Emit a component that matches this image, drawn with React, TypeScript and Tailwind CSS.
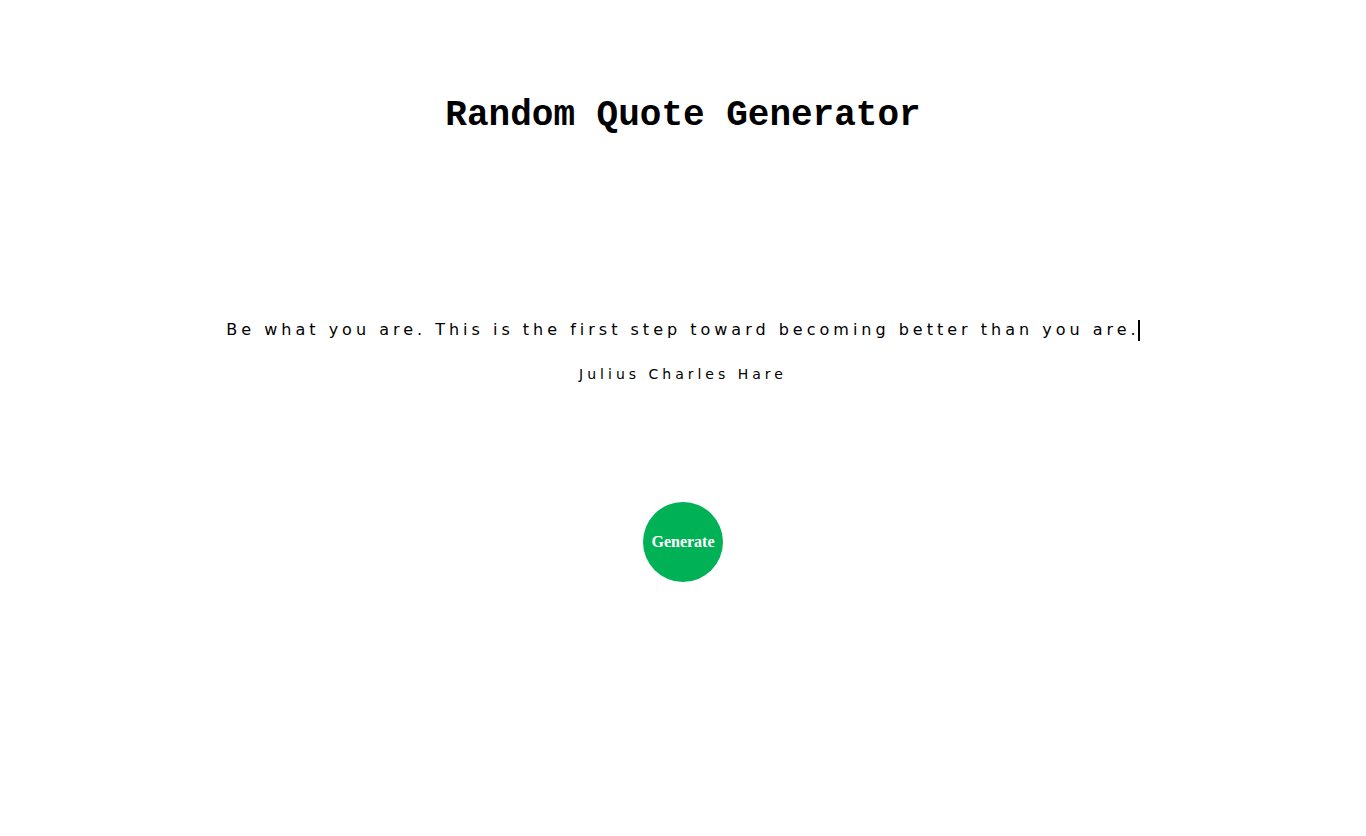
import React from 'react';

export default function App() {
  return (
    <div className="min-h-[836px] w-full bg-white flex flex-col items-center">
      <h1 className="mt-[94px] text-[36px] leading-[44px] font-bold text-black font-['Liberation_Mono',monospace]">
        Random Quote Generator
      </h1>

      {/* quote with typing caret */}
      <div className="mt-[180px] flex items-center text-black font-['DejaVu_Sans',sans-serif]">
        <p className="text-[16px] leading-[24px] tracking-[4px]">
          Be what you are. This is the first step toward becoming better than you are.
        </p>
        <span className="-ml-[2px] h-[21px] w-[2px] bg-black" />
      </div>

      <p className="mt-[23px] text-[14px] leading-[18px] tracking-[4px] text-black font-['DejaVu_Sans',sans-serif]">
        Julius Charles Hare
      </p>

      <button className="mt-[119px] flex h-[80px] w-[80px] items-center justify-center rounded-full bg-[#00b156] text-[16px] font-bold text-white font-['Liberation_Serif',serif]">
        Generate
      </button>
    </div>
  );
}
